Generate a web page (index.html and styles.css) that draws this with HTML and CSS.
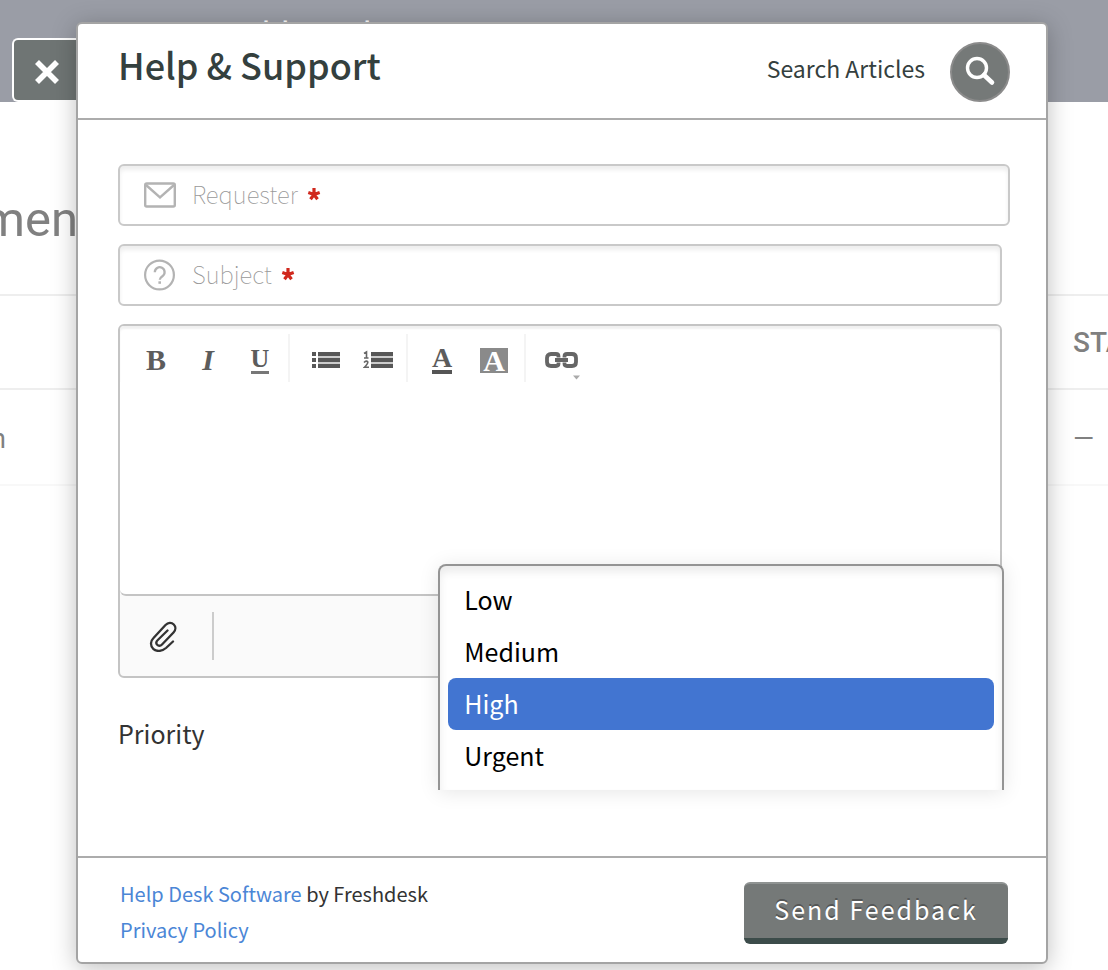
FILE: index.html
```html
<!DOCTYPE html>
<html lang="en">
<head>
<meta charset="utf-8">
<title>Help &amp; Support</title>
<link rel="stylesheet" href="styles.css">
</head>
<body>
<div class="page">
  <div class="topbar">Dashboard</div>
  <h2 class="page-title">men</h2>
  <div class="row row-head"><span class="cell-first"></span><span class="cell-status">STA</span></div>
  <div class="row row-data"><span class="cell-first">n</span><span class="cell-status">—</span></div>
</div>

<div class="overlay">
  <button class="close" type="button" aria-label="Close">
    <svg width="26" height="26" viewBox="0 0 26 26"><path d="M3 3 L23 23 M23 3 L3 23" stroke="#fff" stroke-width="5.6"/></svg>
  </button>
  <form class="dialog">
    <header class="dialog-head">
      <h1 class="title">Help &amp; Support</h1>
      <label class="search-label" for="search">Search Articles</label>
      <button class="search" id="search" type="button">
        <svg width="32" height="34" viewBox="0 0 32 34"><circle cx="13" cy="13" r="9.5" fill="none" stroke="#fff" stroke-width="3.4"/><path d="M20 20 L28 27.5" stroke="#fff" stroke-width="4.6" stroke-linecap="round"/></svg>
      </button>
    </header>

    <div class="dialog-body">
      <div class="field field-wide">
        <svg class="field-icon" width="32" height="32" viewBox="0 0 32 32" fill="none" stroke="#b3b3b3" stroke-width="2.4"><rect x="1.200" y="4.500" width="29.600" height="23" rx="1.500"/><path d="M2 6 L16 18.500 L30 6"/></svg>
        <label class="field-label" for="requester">Requester</label>
        <svg class="star" width="14" height="14" viewBox="0 0 14 14"><path d="M7 7.500V1M7 7.500L1.300 5.600M7 7.500L12.700 5.600M7 7.500L3.500 12.300M7 7.500L10.500 12.300" stroke="#d0281d" stroke-width="3.200"/></svg>
        <input class="field-input" id="requester" type="email">
      </div>
      <div class="field">
        <svg class="field-icon" width="32" height="32" viewBox="0 0 32 32" fill="none" stroke="#b3b3b3" stroke-width="2.200"><circle cx="15.500" cy="16" r="14.400"/><path d="M10.800 13.200a4.900 4.900 0 1 1 7.600 4c-1.700 1.100-2.600 1.700-2.600 3.600" stroke-width="2.300"/><path d="M15.700 22.300v2.500" stroke-width="2.600"/></svg>
        <label class="field-label" for="subject">Subject</label>
        <svg class="star" width="14" height="14" viewBox="0 0 14 14"><path d="M7 7.500V1M7 7.500L1.300 5.600M7 7.500L12.700 5.600M7 7.500L3.500 12.300M7 7.500L10.500 12.300" stroke="#d0281d" stroke-width="3.200"/></svg>
        <input class="field-input" id="subject" type="text">
      </div>

      <div class="editor">
        <div class="toolbar">
          <div class="group">
            <button class="tool bold" type="button">B</button>
            <button class="tool italic" type="button">I</button>
            <button class="tool underline" type="button"><span class="mark">U</span></button>
          </div>
          <div class="group">
            <button class="tool" type="button" aria-label="Bulleted list">
              <svg width="30" height="20" viewBox="0 0 30 20"><path d="M7 10h22" stroke="#ccc" stroke-width="14"/><path d="M1 4h4M7 4h22M1 10h4M7 10h22M1 16h4M7 16h22" stroke="#575757" stroke-width="4"/></svg>
            </button>
            <button class="tool" type="button" aria-label="Numbered list">
              <svg width="30" height="20" viewBox="0 0 30 20"><path d="M8 10h22" stroke="#ccc" stroke-width="14"/><path d="M8 4h22M8 10h22M8 16h22" stroke="#575757" stroke-width="4"/><path d="M1 3.500L3.500 2V8M1 8H5.500M1 12.500Q3.500 10 4.800 12Q5 13.500 1.500 17.200H6" fill="none" stroke="#666" stroke-width="1.600"/></svg>
            </button>
          </div>
          <div class="group group-color">
            <button class="tool color" type="button"><span class="mark">A</span></button>
            <button class="tool fill" type="button"><span class="chip">A</span></button>
          </div>
          <div class="group">
            <button class="tool" type="button" aria-label="Insert link">
              <svg width="36" height="40" viewBox="0 0 36 40" fill="none" stroke="#666" stroke-width="3.800"><path d="M14.500 17.500v-1q0-2.500-2.500-2.500H7q-4 0-4 4v4q0 4 4 4h5q2.500 0 2.500-2.500v-1M20.500 17.500v-1q0-2.500 2.500-2.500h5q4 0 4 4v4q0 4-4 4h-5q-2.500 0-2.500-2.500v-1M11 20h13"/><path d="M29 35.500h7l-3.500 4z" fill="#aaa" stroke="none"/></svg>
            </button>
          </div>
        </div>
        <textarea class="message" aria-label="Message"></textarea>
        <div class="attach-bar">
          <button class="attach" type="button" aria-label="Attach a file">
            <svg width="28" height="32" viewBox="0 0 28 32" fill="none" stroke="#333" stroke-width="2.300" stroke-linecap="round" stroke-linejoin="round"><path d="M24 21.500L17 28C13 31.500 7.500 32 4.200 28.800C1 25.500 1.500 21 4.500 18L16.500 5C19 2.500 22.500 2.300 24.800 4.500C27 6.700 26.800 10 24.500 12.500L13 24.500C11.300 26.200 9.300 26 8.200 24.800C7 23.500 7.200 21.500 8.800 20L18.500 10.500"/></svg>
          </button>
        </div>
      </div>

      <div class="priority">
        <label class="priority-label" for="priority">Priority</label>
        <select class="menu" id="priority" size="4">
          <option>Low</option>
          <option>Medium</option>
          <option selected>High</option>
          <option>Urgent</option>
        </select>
      </div>
    </div>

    <footer class="dialog-foot">
      <div class="credits">
        <div><a href="#software">Help Desk Software</a> by Freshdesk</div>
        <div><a href="#privacy">Privacy Policy</a></div>
      </div>
      <button class="send" type="submit">Send Feedback</button>
    </footer>
  </form>
</div>
</body>
</html>
```
FILE: styles.css
```css
* { box-sizing: border-box; }
body {
  margin: 0;
  position: relative;
  min-height: 100vh;
  overflow: hidden;
  background: #fff;
  color: #333;
  font-family: "Noto Sans CJK JP", "Open Sans", sans-serif;
}
button, input, select, textarea { font-family: inherit; }
button { padding: 0; border: 0; background: none; cursor: pointer; }
svg { display: block; flex: none; }

/* Page behind the dialog */
.page { font-family: Roboto, sans-serif; color: #808080; }
.topbar {
  height: 102px;
  padding: 16px 0 0 202px;
  background: #9a9da6;
  color: #fff;
  font-size: 35px;
  line-height: 40px;
}
.page-title {
  margin: 0 0 0 -18px;
  padding-top: 88px;
  height: 192px;
  font-size: 49px;
  font-weight: 400;
  line-height: 60px;
}
.row {
  display: flex;
  justify-content: space-between;
  align-items: center;
  height: 96px;
  border-bottom: 2px solid #f8f8f8;
  overflow: hidden;
}
.row-head { border-top: 2px solid #eee; border-bottom-color: #eee; font-size: 28px; font-weight: 500; }
.row-data { padding-top: 4px; font-size: 27px; }
.cell-first { margin-left: -9px; }
.cell-status { width: 35px; white-space: nowrap; }

/* Dialog */
.overlay {
  position: absolute;
  inset: 0;
  display: flex;
  align-items: flex-start;
  padding: 22px 60px 6px 12px;
}
.close {
  display: flex;
  align-items: center;
  justify-content: center;
  width: 64px;
  height: 64px;
  margin-top: 16px;
  padding: 4px 0 0 4px;
  border: 2px solid #fff;
  border-right: 0;
  border-radius: 6px 0 0 6px;
  background: #6f7574;
}
.dialog {
  flex: 1;
  min-height: 100%;
  display: flex;
  flex-direction: column;
  border: 2px solid #a4a4a4;
  border-radius: 6px;
  background: #fff;
  box-shadow: 0 4px 24px rgba(0, 0, 0, 0.25);
}
.dialog-head {
  display: flex;
  align-items: center;
  height: 96px;
  padding: 2px 36px 0 40px;
  border-bottom: 2px solid #acacac;
  color: #34403e;
}
.title { flex: 1; margin: 0; padding-bottom: 16px; font-size: 36px; font-weight: 500; line-height: 48px; }
.search-label { padding-bottom: 8px; font-size: 23px; line-height: 36px; }
.search {
  display: flex;
  align-items: center;
  justify-content: center;
  width: 60px;
  height: 60px;
  margin-left: 25px;
  border: 2px solid #8b8b8b;
  border-radius: 50%;
  background: #757978;
}
.dialog-body { flex: 1; padding: 44px 44px 0 40px; }
.field {
  display: flex;
  align-items: center;
  height: 62px;
  margin-bottom: 18px;
  padding: 0 24px;
  border: 2px solid #c9c9c9;
  border-radius: 6px;
  box-shadow: inset 0 4px 4px rgba(0, 0, 0, 0.07);
}
.field-wide { margin-right: -8px; }
.field-label { margin-left: 16px; padding-bottom: 2px; color: #999; font-size: 24px; font-weight: 100; line-height: 36px; }
.star { margin: 0 0 2px 9px; }
.field-input { flex: 1; min-width: 0; height: 48px; border: 0; background: none; font-size: 24px; outline: 0; }

.editor {
  border: 2px solid #c4c4c4;
  border-radius: 6px;
  background: #fafafa;
}
.toolbar {
  display: flex;
  padding-top: 8px;
  border-radius: 4px 4px 0 0;
  background: #fff;
  box-shadow: inset 0 3px 2px rgba(0, 0, 0, 0.06);
}
.group { display: flex; padding: 0 2px 0 10px; border-right: 2px solid #f4f4f4; }
.group-color { padding: 0 4px 0 8px; }
.group:last-child { border: 0; }
.tool {
  display: flex;
  align-items: center;
  justify-content: center;
  width: 52px;
  height: 48px;
  padding-top: 4px;
  color: #5c5c5c;
  font-family: "Liberation Serif", serif;
  font-size: 30px;
  font-weight: 700;
  line-height: 32px;
}
.italic { font-style: italic; }
.mark { border-bottom: 3px solid #777; line-height: 24px; font-size: 26px; }
.color .mark { border-bottom: 4px solid #555; font-size: 28px; }
.chip { width: 28px; height: 25px; background: #8a8a8a; color: #fff; line-height: 26px; font-size: 30px; }
.message {
  display: block;
  width: 100%;
  height: 214px;
  padding: 12px 24px;
  border: 0;
  border-bottom: 2px solid #c4c4c4;
  border-radius: 0 0 4px 6px;
  background: #fff;
  font-size: 24px;
  resize: none;
  outline: 0;
}
.attach-bar { display: flex; align-items: center; height: 80px; }
.attach {
  display: flex;
  align-items: center;
  width: 94px;
  height: 48px;
  padding-left: 29px;
  border-right: 2px solid #ccc;
}

.priority {
  position: relative;
  display: flex;
  align-items: center;
  height: 60px;
  margin-top: 26px;
}
.priority-label { padding-bottom: 2px; font-size: 25px; line-height: 36px; }
.menu {
  position: absolute;
  right: -2px;
  bottom: -26px;
  width: 64%;
  height: 226px;
  margin: 0;
  padding: 8px 8px 6px;
  border: 2px solid #949494;
  border-bottom: 0;
  border-radius: 8px 8px 0 0;
  background: #fff;
  box-shadow: inset 0 6px 8px rgba(0, 0, 0, 0.08), 0 2px 20px rgba(0, 0, 0, 0.1);
  color: #000;
  font-size: 25px;
  outline: 0;
  overflow: hidden;
  appearance: none;
}
.menu option {
  height: 52px;
  min-height: 52px;
  padding: 7px 16px 0;
  border-radius: 8px;
}
.menu option:checked {
  background: #4275d1 linear-gradient(#4275d1, #4275d1);
  -webkit-text-fill-color: #fff;
}

.dialog-foot {
  display: flex;
  justify-content: space-between;
  align-items: flex-start;
  height: 106px;
  padding: 18px 38px 0 42px;
  border-top: 2px solid #acacac;
}
.credits { font-size: 20px; line-height: 36px; }
.credits a { color: #4b86d6; text-decoration: none; }
.send {
  width: 264px;
  height: 62px;
  margin-top: 6px;
  padding-bottom: 4px;
  border-top: 2px solid #8f9392;
  border-bottom: 6px solid #3c4c4a;
  border-radius: 6px;
  background: #757978;
  color: #fff;
  font-size: 25px;
  letter-spacing: 2px;
  text-shadow: 0 -2px 0 rgba(0, 0, 0, 0.3);
}
```
